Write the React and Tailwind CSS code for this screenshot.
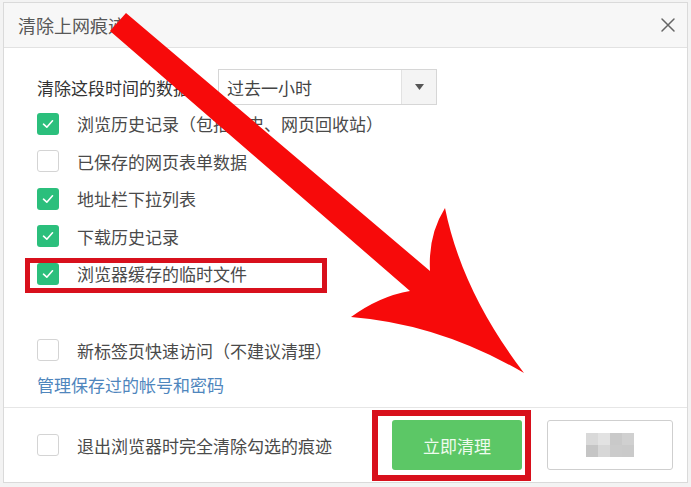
import React from "react";

const rows = [
  { label: "浏览历史记录（包括历史、网页回收站）", checked: true },
  { label: "已保存的网页表单数据", checked: false },
  { label: "地址栏下拉列表", checked: true },
  { label: "下载历史记录", checked: true },
  { label: "浏览器缓存的临时文件", checked: true },
];

function Check({ checked }) {
  if (!checked) {
    return <div className="size-[22px] shrink-0 rounded-[3px] border border-[#d4d4d4] bg-white" />;
  }
  return (
    <div className="size-[22px] shrink-0 rounded-[3px] bg-[#2bbf7c] flex items-center justify-center">
      <svg width="14" height="14" viewBox="0 0 14 14">
        <path d="M2.5 7.2 L5.8 10.2 L11.5 3.8" fill="none" stroke="#ffffff" strokeWidth="1.6" strokeLinecap="round" strokeLinejoin="round" />
      </svg>
    </div>
  );
}

function Row({ label, checked, className = "h-[37.5px]" }) {
  return (
    <div className={`flex items-center ${className}`}>
      <Check checked={checked} />
      <span className="ml-[18px] text-[17px] leading-none text-[#4a4a4a]">{label}</span>
    </div>
  );
}

// mosaic over the second button label
const mosaic = ["#d9d9d9", "#e2e2e2", "#c9c9c9", "#d0d0d0", "#c5c5c5", "#d7d7d7", "#cbcbcb", "#cacaca"];

export default function App() {
  return (
    <div className="relative w-[691px] h-[487px] overflow-hidden bg-[#f3f3f3] font-['Noto_Sans_CJK_SC','Noto_Sans',sans-serif]">
      <div className="mx-[3px] mt-[2px] h-[481px] border border-[#dadada] bg-white flex flex-col">
        <div className="h-[45px] shrink-0 bg-[#f7f7f7] border-b border-[#e2e2e2] flex items-center justify-between pl-[14px] pr-[11px]">
          <span className="text-[18px] leading-none text-[#585858]">清除上网痕迹</span>
          <svg width="16" height="16" viewBox="0 0 16 16">
            <path d="M2 2 L14 14 M14 2 L2 14" stroke="#666" strokeWidth="1.5" strokeLinecap="round" />
          </svg>
        </div>

        <div className="flex-1 pl-[33px] pt-[21px]">
          <div className="h-[36px] flex items-center">
            <span className="w-[170px] text-[17px] leading-none text-[#333]">清除这段时间的数据：</span>
            <div className="ml-[11px] w-[219px] h-[36px] border border-[#d6d6d6] flex">
              <span className="flex-1 pl-[8px] flex items-center text-[17px] leading-none text-[#444]">过去一小时</span>
              <div className="w-[35px] bg-[#f4f4f4] border-l border-[#e2e2e2] flex items-center justify-center">
                <svg width="9" height="6" viewBox="0 0 9 6">
                  <path d="M0 0 L9 0 L4.5 6 Z" fill="#555" />
                </svg>
              </div>
            </div>
          </div>
          {rows.map((r) => (
            <Row key={r.label} label={r.label} checked={r.checked} />
          ))}
          <div className="h-[39px]" />
          <Row label="新标签页快速访问（不建议清理）" checked={false} />
          <div className="h-[30px] flex items-center">
            <span className="text-[17px] leading-none text-[#4f86bd]">管理保存过的帐号和密码</span>
          </div>
        </div>

        <div className="h-[75px] shrink-0 border-t border-[#e6e6e6] flex items-center pl-[33px]">
          <Check checked={false} />
          <span className="ml-[18px] w-[255px] text-[17px] leading-none text-[#4a4a4a]">退出浏览器时完全清除勾选的痕迹</span>
          <button className="ml-[60px] w-[130px] h-[50px] rounded-[3px] bg-[#5cc766] text-[17px] leading-none text-[#eefbee]">
            立即清理
          </button>
          <button className="ml-[25px] w-[126px] h-[50px] rounded-[3px] border border-[#cfcfcf] bg-white flex items-center justify-center">
            <div className="grid grid-cols-4 w-[48px]">
              {mosaic.map((c, i) => (
                <div key={i} className="h-[12px]" style={{ backgroundColor: c }} />
              ))}
            </div>
          </button>
        </div>
      </div>

      <svg className="absolute inset-0 pointer-events-none" width="691" height="487" viewBox="0 0 691 487">
        <rect x="27.5" y="260.5" width="297" height="30" fill="none" stroke="#d8101c" strokeWidth="5" />
        <rect x="375" y="413" width="153" height="65" fill="none" stroke="#d8101c" strokeWidth="6" />
        <path
          d="M110 31 L126 13 L430 271 Q428 235 445 208 Q462 292 524 373 Q440 324 351 317 Q380 296 410 291 Z"
          fill="#f70a0a"
        />
      </svg>
    </div>
  );
}
